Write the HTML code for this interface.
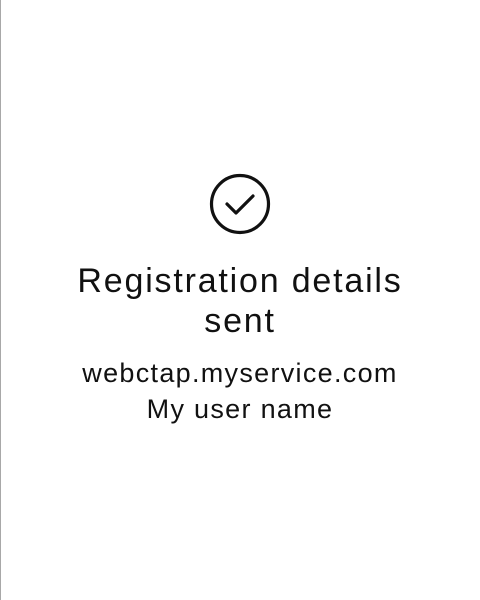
<!DOCTYPE html>
<html><head><style>
html,body{margin:0;padding:0;background:#fff;}
body{width:480px;height:600px;position:relative;overflow:hidden;font-family:"Liberation Sans",Arial,sans-serif;color:#111;}
.bl{position:absolute;left:0;top:0;width:1px;height:600px;background:#a8a8a8;}
svg{position:absolute;left:209px;top:173px;}
.t{position:absolute;left:0;width:480px;text-align:center;font-size:34px;letter-spacing:1.8px;line-height:40px;top:261px;}
.s{position:absolute;left:0;width:480px;text-align:center;font-size:27px;letter-spacing:1.3px;line-height:36px;top:355px;}
</style></head><body>
<div class="bl"></div>
<svg width="62" height="62" viewBox="0 0 62 62"><circle cx="31" cy="31" r="28.5" fill="none" stroke="#111" stroke-width="3.2"/><path d="M18 31 L27 40 L44 23" fill="none" stroke="#111" stroke-width="3.2" stroke-linecap="round" stroke-linejoin="round"/></svg>
<div class="t">Registration details<br>sent</div>
<div class="s">webctap.myservice.com<br>My user name</div>
</body></html>
